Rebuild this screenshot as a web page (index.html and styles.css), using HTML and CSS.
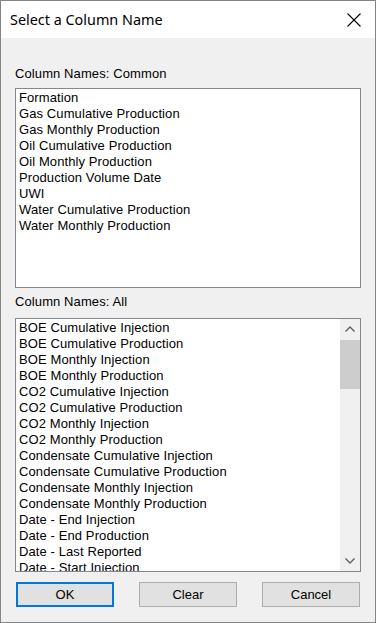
FILE: index.html
```html
<!DOCTYPE html>
<html lang="en">
<head>
  <meta charset="UTF-8">
  <title>Select a Column Name</title>
  <link rel="stylesheet" href="styles.css">
</head>
<body>

<div class="window">
  <div class="titlebar">
    <span class="title">Select a Column Name</span>
    <svg class="close" width="14" height="14" viewBox="0 0 14 14">
      <path d="M0.5 0.5 L13.5 13.5 M13.5 0.5 L0.5 13.5" stroke="#000" stroke-width="1.1" fill="none"/>
    </svg>
  </div>

  <div class="content">
    <div class="label label-common">Column Names: Common</div>
    <div class="listbox list-common">
      <div class="items">
        <div class="item">Formation</div>
        <div class="item">Gas Cumulative Production</div>
        <div class="item">Gas Monthly Production</div>
        <div class="item">Oil Cumulative Production</div>
        <div class="item">Oil Monthly Production</div>
        <div class="item">Production Volume Date</div>
        <div class="item">UWI</div>
        <div class="item">Water Cumulative Production</div>
        <div class="item">Water Monthly Production</div>
      </div>
    </div>

    <div class="label label-all">Column Names: All</div>
    <div class="listbox list-all">
      <div class="items">
        <div class="item">BOE Cumulative Injection</div>
        <div class="item">BOE Cumulative Production</div>
        <div class="item">BOE Monthly Injection</div>
        <div class="item">BOE Monthly Production</div>
        <div class="item">CO2 Cumulative Injection</div>
        <div class="item">CO2 Cumulative Production</div>
        <div class="item">CO2 Monthly Injection</div>
        <div class="item">CO2 Monthly Production</div>
        <div class="item">Condensate Cumulative Injection</div>
        <div class="item">Condensate Cumulative Production</div>
        <div class="item">Condensate Monthly Injection</div>
        <div class="item">Condensate Monthly Production</div>
        <div class="item">Date - End Injection</div>
        <div class="item">Date - End Production</div>
        <div class="item">Date - Last Reported</div>
        <div class="item">Date - Start Injection</div>
        <div class="item">Date - Start Production</div>
        <div class="item">Days On Injection</div>
      </div>
      <div class="scrollbar">
        <div class="arrow">
          <svg width="10" height="6" viewBox="0 0 10 6">
            <path d="M0.5 5.5 L5 1 L9.5 5.5" stroke="#606060" stroke-width="1.4" fill="none"/>
          </svg>
        </div>
        <div class="track">
          <div class="thumb"></div>
        </div>
        <div class="arrow">
          <svg width="10" height="6" viewBox="0 0 10 6">
            <path d="M0.5 0.5 L5 5 L9.5 0.5" stroke="#606060" stroke-width="1.4" fill="none"/>
          </svg>
        </div>
      </div>
    </div>

    <div class="buttons">
      <button type="button" class="btn btn-default">OK</button>
      <button type="button" class="btn">Clear</button>
      <button type="button" class="btn">Cancel</button>
    </div>
  </div>
</div>

</body>
</html>
```

FILE: styles.css
```css
body {
  margin: 0;
  font-family: "Liberation Sans", Arial, sans-serif;
  font-size: 13px;
  color: #000;
  background: #f0f0f0;
}
.window {
  width: 376px;
  height: 623px;
  box-sizing: border-box;
  border: 1px solid #858585;
  background: #f0f0f0;
}
.titlebar {
  height: 37px;
  background: #fff;
  display: flex;
  align-items: center;
  justify-content: space-between;
  padding: 0 14px 0 9px;
}
.title {
  font-family: "Noto Sans", sans-serif;
  font-size: 14.4px;
  color: #000;
  padding-bottom: 1px;
}
.close {
  display: block;
  margin-top: 1px;
}
.content {
  padding: 0 14px;
}
.label {
  height: 16px;
  line-height: 16px;
  white-space: nowrap;
  letter-spacing: 0.1px;
}
.label-common {
  margin-top: 28px;
}
.label-all {
  margin-top: 6px;
}
.listbox {
  box-sizing: border-box;
  border: 1px solid #828790;
  background: #fff;
  overflow: hidden;
  display: flex;
}
.list-common {
  margin-top: 6px;
  height: 200px;
}
.list-all {
  margin-top: 8px;
  height: 254px;
}
.items {
  flex: 1;
  padding: 1px 0 0 3px;
  overflow: hidden;
}
.item {
  height: 16px;
  line-height: 16px;
  white-space: nowrap;
  letter-spacing: 0.1px;
}
.scrollbar {
  width: 20px;
  background: #f0f0f0;
  display: flex;
  flex-direction: column;
}
.arrow {
  height: 20px;
  display: flex;
  align-items: center;
  justify-content: center;
}
.arrow svg {
  display: block;
}
.track {
  flex: 1;
  padding-top: 1px;
}
.thumb {
  height: 49px;
  background: #cdcdcd;
}
.buttons {
  margin-top: 10px;
  padding: 0 1px;
  display: flex;
  justify-content: space-between;
}
.btn {
  width: 98px;
  height: 25px;
  box-sizing: border-box;
  border: 1px solid #adadad;
  background: #e1e1e1;
  font-family: "Liberation Sans", Arial, sans-serif;
  font-size: 13px;
  line-height: 16px;
  color: #000;
  padding: 0;
}
.btn-default {
  border: 2px solid #0078d7;
}
```
